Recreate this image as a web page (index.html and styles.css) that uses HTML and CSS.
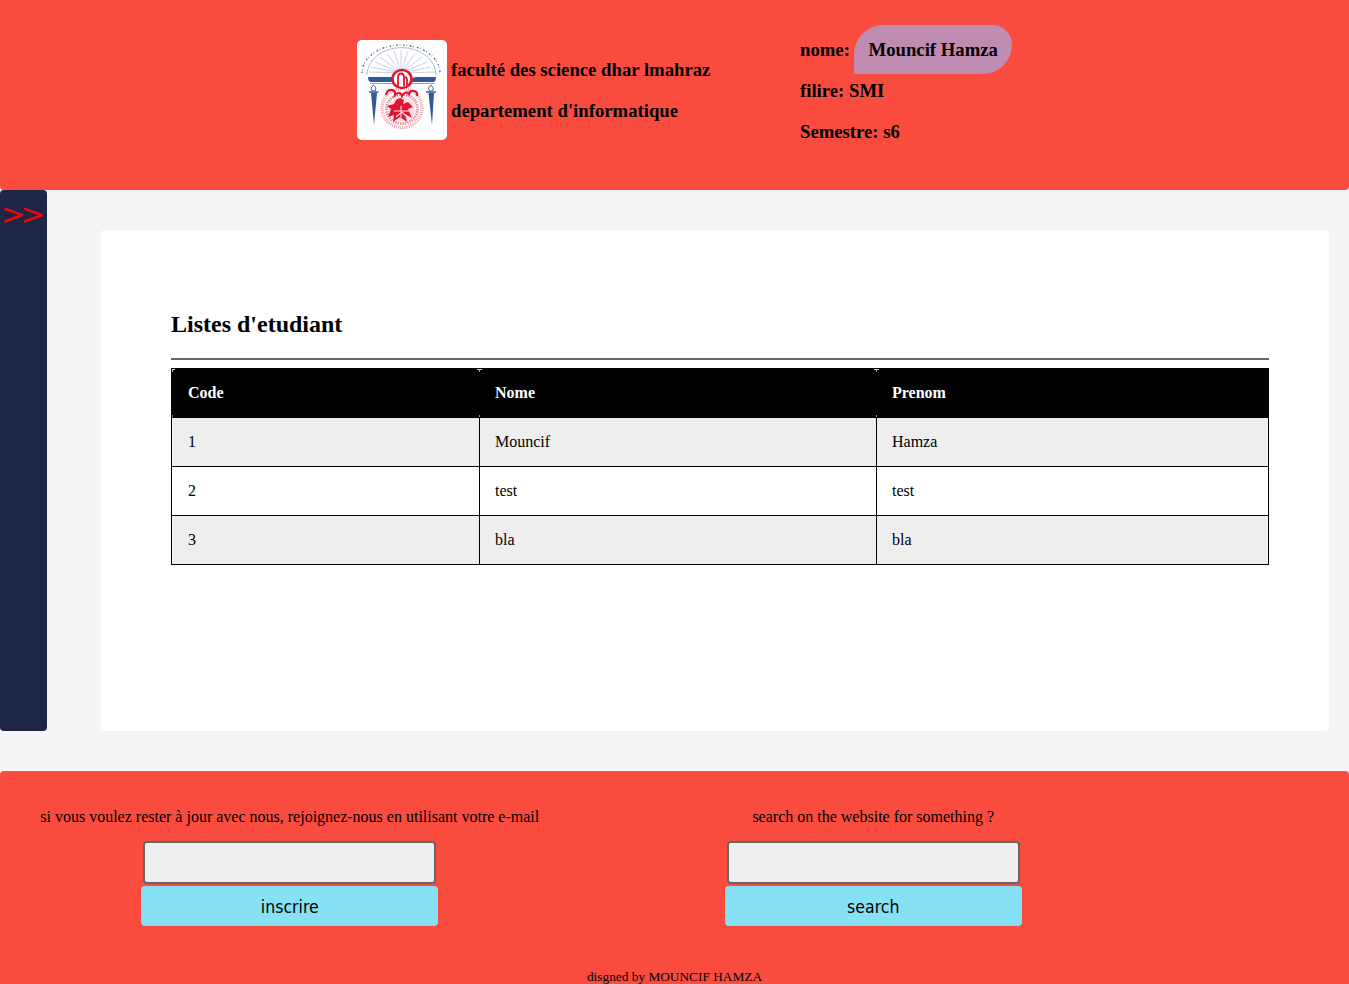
FILE: index.html
```html
<!DOCTYPE html>
<html lang="fr">
<head>
<meta charset="utf-8">
<title>Listes d'etudiant</title>
<link rel="stylesheet" href="styles.css">
</head>
<body>
<header class="top">
  <div class="logo">
    <svg class="logo-svg" viewBox="0 0 90 100" width="90" height="100" aria-hidden="true">
      <g stroke="#b4bfd8" stroke-width=".7" fill="none">
        <path d="M44 33V10M44 33L37 11M44 33L30 13.500M44 33L23 17M44 33L18 22M44 33L14 27M44 33L12 32M44 33L51 11M44 33L58 13.500M44 33L65 17M44 33L70 22M44 33L74 27M44 33L78 32"/>
        <path d="M10 35A34 27 0 0 1 79 35" stroke="#8d9cc2"/>
      </g>
      <path d="M5 33A39 28 0 0 1 83 33" fill="none" stroke="#3c5a9c" stroke-width="1.200" stroke-dasharray="1.500 1.700 .6 2.600 2 1.600 .8 3"/>
      <path d="M11 37H35Q41 37 41 42H14Q11 42 11 37ZM79 37H60Q54 37 54 42H76Q79 42 79 37Z" fill="#34579b"/>
      <path d="M13 43.500H37M55 43.500H77" stroke="#8d9cc2" stroke-width="1"/>
      <path d="M16.500 45l2.500 3-1 3h-3l-1-3ZM74 45l2.500 3-1 3h-3l-1-3Z" fill="none" stroke="#34579b" stroke-width=".9"/>
      <path d="M12 52H21.500M69 52H79" stroke="#34579b" stroke-width="1.400"/>
      <path d="M14 53H20L17 85ZM71.500 53H77L75 85Z" fill="#34579b"/>
      <ellipse cx="45" cy="68" rx="20" ry="19.500" fill="none" stroke="#f2a3b0" stroke-width="3.500" stroke-dasharray="1 1.100"/>
      <ellipse cx="45" cy="69" rx="15.500" ry="14.500" fill="none" stroke="#ee8b9b" stroke-width="3" stroke-dasharray="1.400 1"/>
      <ellipse cx="45" cy="69" rx="13" ry="12" fill="#fbdde2"/>
      <path d="M43 58L47 60L46 64L51 62L56 67L51 69L55 78L48 74L50 82L43 77L36 82L37 75L31 77L34 69L30 66L37 64L39 60Z" fill="#e0152f"/>
      <path d="M37 71H52M44 66V77M39 77L45 72L50 77" fill="none" stroke="#fbdde2" stroke-width="1.100"/>
      <path d="M29 55Q30 49 35 50Q39 51 38 55Q43 50 45 56Q49 50 52 54Q53 50 57 51Q61 52 60 56" fill="none" stroke="#e0152f" stroke-width="2.200"/>
      <ellipse cx="45" cy="39" rx="9.500" ry="9" fill="#fff" stroke="#e0152f" stroke-width="2.600"/>
      <path d="M41 47V38Q41 33.500 44 33.500Q47 33.500 47 38V46M47 39Q50 35 50 40V45" fill="none" stroke="#e0152f" stroke-width="1.800"/>
      <path d="M44 88.500h2" stroke="#a9a9a9" stroke-width=".7"/>
    </svg>
  </div>
  <div class="school">
    <p>faculté des science dhar lmahraz</p>
    <p>departement d'informatique</p>
  </div>
  <div class="student">
    <p>nome: <span class="pill">Mouncif Hamza</span></p>
    <p>filire: SMI</p>
    <p>Semestre: s6</p>
  </div>
</header>

<div class="middle">
  <aside class="side">&gt;&gt;</aside>
  <main class="card">
    <h2 class="title">Listes d'etudiant</h2>
    <hr class="rule">
    <table class="students">
      <thead>
        <tr><th class="c1">Code</th><th class="c2">Nome</th><th class="c3">Prenom</th></tr>
      </thead>
      <tbody>
        <tr><td class="first">1</td><td>Mouncif</td><td>Hamza</td></tr>
        <tr><td class="first">2</td><td>test</td><td>test</td></tr>
        <tr><td class="first">3</td><td>bla</td><td>bla</td></tr>
      </tbody>
    </table>
  </main>
</div>

<footer class="bottom">
  <div class="forms">
    <form class="box">
      <p class="lead">si vous voulez rester à jour avec nous, rejoignez-nous en utilisant votre e-mail</p>
      <input class="field" type="text">
      <button class="btn" type="button">inscrire</button>
    </form>
    <form class="box">
      <p class="lead">search on the website for something ?</p>
      <input class="field" type="text">
      <button class="btn" type="button">search</button>
    </form>
  </div>
  <p class="credit">disgned by MOUNCIF HAMZA</p>
</footer>
</body>
</html>
```

FILE: styles.css
```css
* { box-sizing: border-box; }
html, body { margin: 0; height: 984px; overflow: hidden; }
body {
  background: #f5f5f5;
  font-family: "Liberation Serif", "Times New Roman", serif;
  color: #000;
}

.top {
  height: 190px;
  background: #f94c3f;
  border-radius: 0 0 4px 4px;
  display: flex;
  align-items: flex-start;
  padding: 40px 0 0 357px;
  font-size: 18.72px;
  font-weight: 700;
}
.logo { width: 90px; height: 100px; background: #fff; border-radius: 5px; flex: none; }
.logo-svg { display: block; }
.school { width: 349px; margin-left: 4px; padding-top: 19px; }
.school p { margin: 0 0 20px; line-height: 21px; }
.student { margin-top: -1px; }
.student p { margin: 0 0 20px; line-height: 21px; }
.pill {
  background: #c08bb0;
  padding: 14px 14px 14px 15px;
  margin-left: -1px;
  border-radius: 30px 20px 30px 0;
}

.middle { display: flex; height: 541px; }
.side {
  width: 47px;
  background: #1f2544;
  border-radius: 4px;
  color: #f00;
  font-family: "DejaVu Sans", sans-serif;
  font-size: 29px;
  line-height: 48px;
  letter-spacing: -4.500px;
  padding-left: 1px;
}
.card {
  width: 1228px;
  margin: 40px 0 0 54px;
  background: #fff;
  border-radius: 4px;
  padding: 80px 60px 0 70px;
}
.title { margin: 0; font-size: 24px; line-height: 28px; }
.rule {
  margin: 20px 0 8px;
  height: 2px;
  border: 0;
  background: #666;
}
.students {
  width: 1098px;
  border-collapse: collapse;
  table-layout: fixed;
  font-size: 16px;
}
.students th {
  position: relative;
  background: #000;
  color: #fff;
  height: 49px;
  text-align: left;
  padding: 0 0 0 15px;
  border: 1px solid #000;
}
.students th::before {
  content: "";
  position: absolute;
  top: 0;
  left: -3px;
  width: 5px;
  height: 3px;
  background:
    linear-gradient(#ddd, #ddd) top / 100% 1px no-repeat,
    linear-gradient(#999, #999) center / 1px 100% no-repeat;
}
.students th::after {
  content: "";
  position: absolute;
  bottom: 0;
  left: -1px;
  width: 1px;
  height: 2px;
  background: #888;
}
.students th.c1::before {
  left: 0;
  width: 3px;
  background:
    linear-gradient(#ddd, #ddd) top / 100% 1px no-repeat,
    linear-gradient(#999, #999) left / 1px 100% no-repeat;
}
.students th.c1::after { left: 0; }
.students th.c1 { width: 308px; padding-left: 16px; }
.students th.c2 { width: 397px; }
.students td {
  height: 49px;
  padding: 0 0 0 15px;
  border: 1px solid #000;
}
.students td.first { padding-left: 16px; }
.students tbody tr:nth-child(odd) { background: #eee; }

.bottom {
  margin-top: 40px;
  height: 213px;
  background: #f94c3f;
  border-radius: 4px 4px 0 0;
  padding-top: 37px;
}
.forms { display: grid; grid-template-columns: 579.5px 587.5px; height: 161px; }
.box { display: flex; flex-direction: column; align-items: center; }
.lead { margin: 0 0 15px; font-size: 16px; line-height: 18px; }
.field {
  width: 293.330px;
  height: 43px;
  background: #efefef;
  border: 2px solid #666;
  border-radius: 4px;
  padding: 0;
}
.btn {
  width: 297px;
  height: 40px;
  margin-top: 2px;
  background: #87e1f5;
  border: 0;
  border-radius: 4px;
  font-family: "DejaVu Sans Condensed", "DejaVu Sans", sans-serif;
  font-stretch: condensed;
  font-size: 17.500px;
  color: #000;
  padding: 1px 0 0;
}
.credit { margin: 0; font-size: 13.330px; line-height: 16px; text-align: center; }
```
